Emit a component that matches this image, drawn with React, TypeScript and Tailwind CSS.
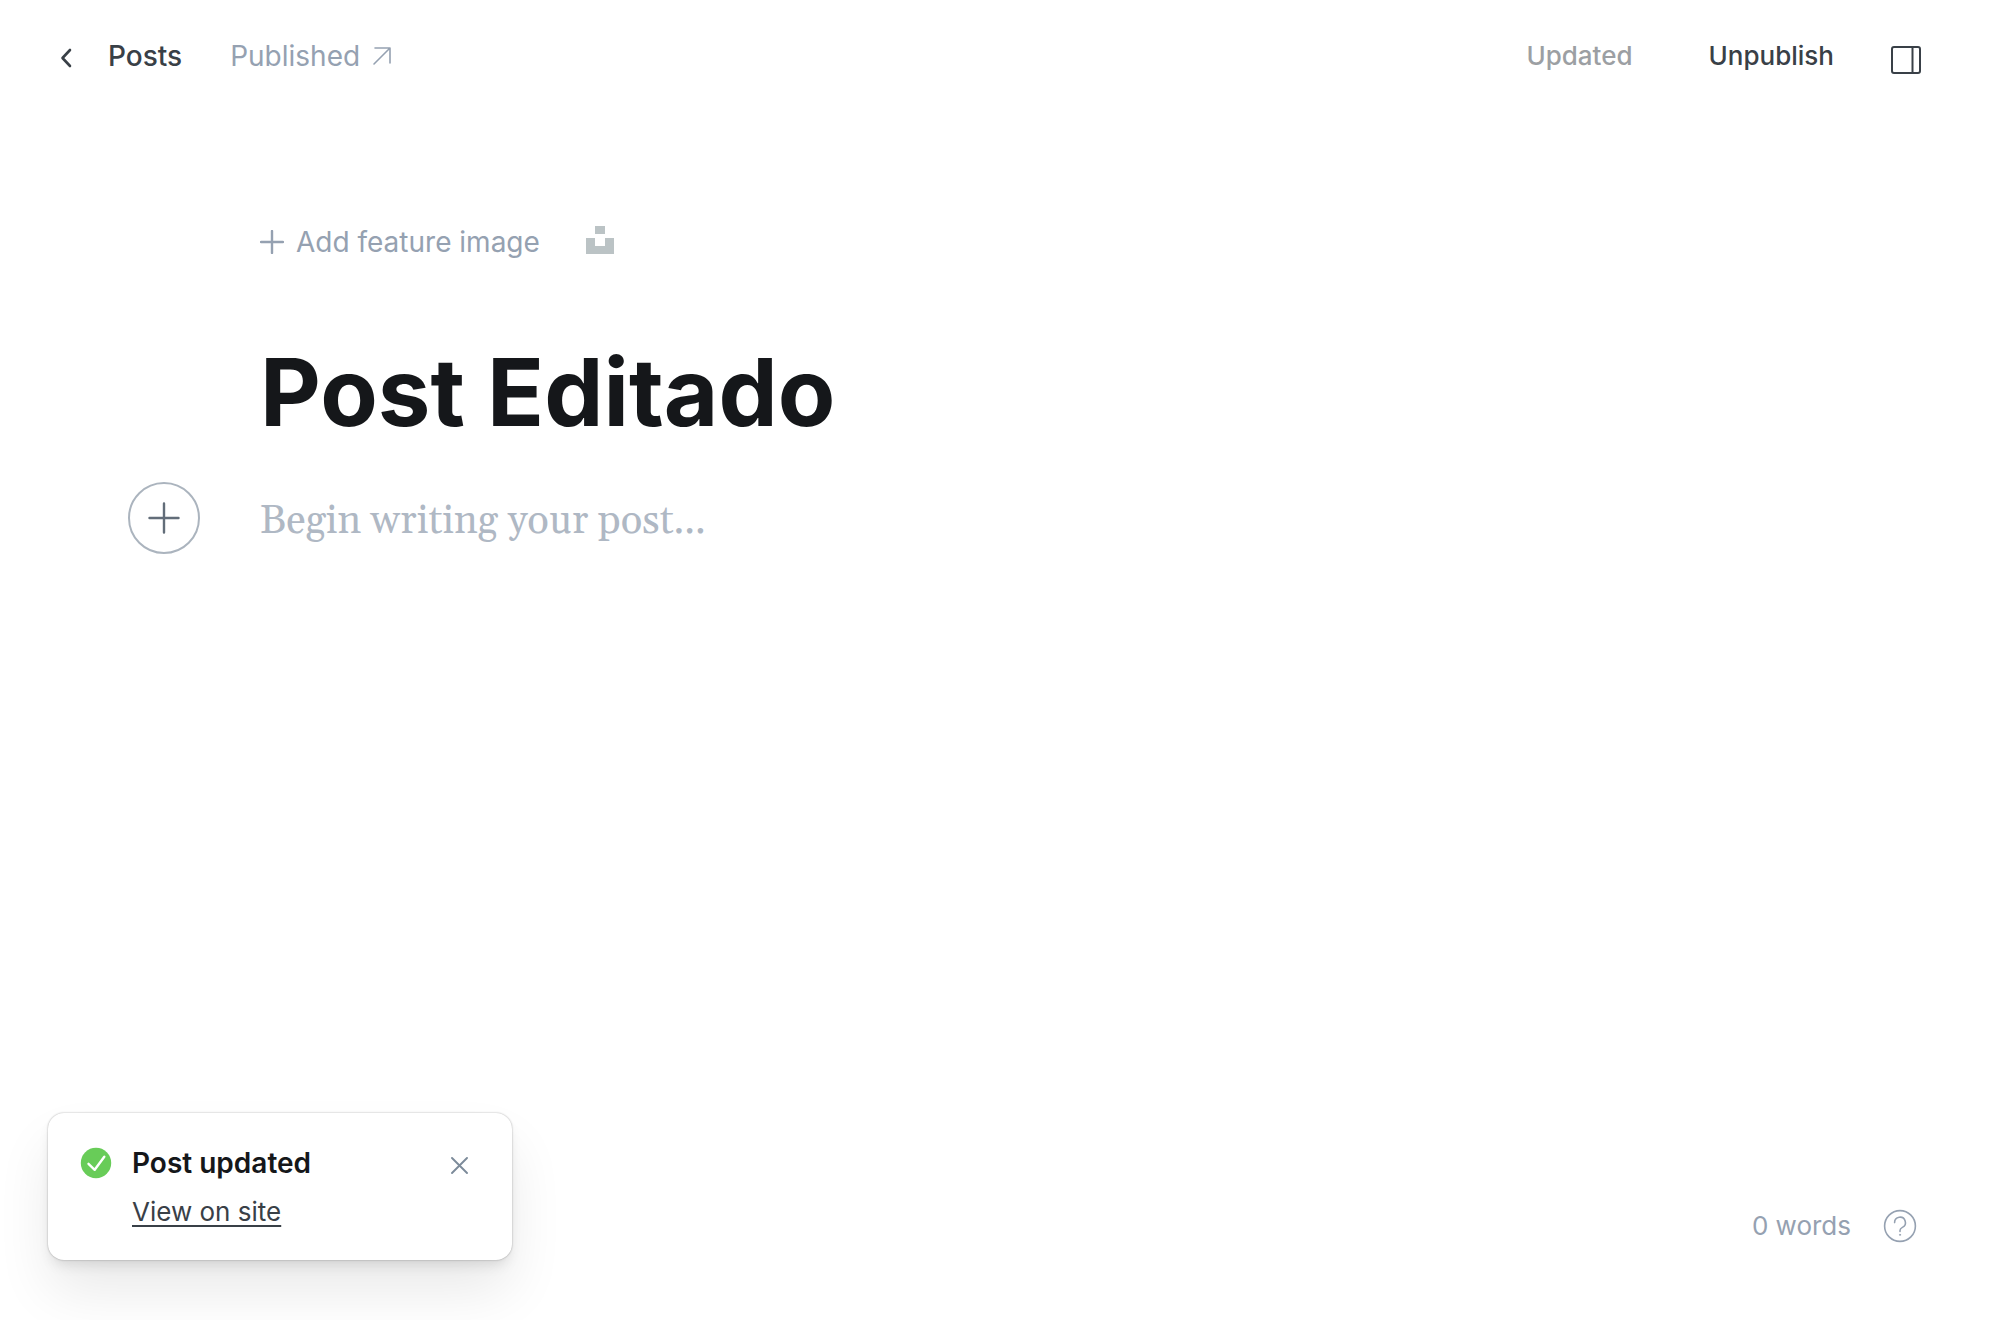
function Header() {
  return (
    <header className="flex items-start justify-between pt-9 pr-[78px] pl-[60px] leading-10">
      <nav className="flex items-center text-[28px]">
        <a href="#posts" className="flex items-center gap-9 font-medium text-[#394047]">
          <svg width="12" height="20" viewBox="0 0 12 20" fill="none" stroke="currentColor" strokeWidth="2.6" strokeLinecap="round" strokeLinejoin="round" className="mt-1" aria-hidden="true">
            <path d="M10 2 2.5 10 10 18" />
          </svg>
          Posts
        </a>
        <a href="#published" className="ml-12 flex items-center gap-3 text-[#95a1b1]">
          Published
          <svg width="20" height="20" viewBox="0 0 20 20" fill="none" stroke="currentColor" strokeWidth="1.6" strokeLinecap="round" strokeLinejoin="round" aria-hidden="true">
            <path d="M2 18 18 2M3 2h15v15" />
          </svg>
        </a>
      </nav>
      <div className="flex items-center text-[26px] font-medium">
        <span className="text-[#9c9fa3]">Updated</span>
        <button type="button" className="ml-[76px] text-[#394047]">Unpublish</button>
        <button type="button" aria-label="Settings" className="mt-2 ml-14 text-[#394047]">
          <svg width="32" height="28" viewBox="0 0 32 28" fill="none" stroke="currentColor" strokeWidth="2" className="block" aria-hidden="true">
            <rect x="2" y="1" width="28" height="26" rx="2" />
            <path d="M22.5 1v26" />
          </svg>
        </button>
      </div>
    </header>
  );
}

function Editor() {
  return (
    <main className="grow pt-[146px] pr-12 pl-[260px]">
      <div className="flex items-center gap-[46px] text-[28px] leading-10 text-[#95a1b1]">
        <button type="button" className="flex items-center gap-3">
          <svg width="24" height="24" viewBox="0 0 24 24" fill="none" stroke="currentColor" strokeWidth="2.4" strokeLinecap="round" aria-hidden="true">
            <path d="M12 1v22M1 12h22" />
          </svg>
          Add feature image
        </button>
        <button type="button" aria-label="Select from Unsplash" className="-mt-1 text-[#bbc3c5]">
          <svg width="28" height="28" viewBox="0 0 28 28" fill="currentColor" className="block" aria-hidden="true">
            <path d="M9 0h10v8H9zM0 12h9v8h10v-8h9v16H0z" />
          </svg>
        </button>
      </div>
      <h1 className="mt-[74px] text-[94px] leading-[112px] font-bold text-[#15171a]">Post Editado</h1>
      <div className="mt-[34px] -ml-[132px] flex items-center gap-[60px]">
        <button type="button" aria-label="Add a card" className="flex size-[72px] shrink-0 items-center justify-center rounded-full border-2 border-[#abb4be] text-[#626d79]">
          <svg width="32" height="32" viewBox="0 0 32 32" fill="none" stroke="currentColor" strokeWidth="2.4" strokeLinecap="round" aria-hidden="true">
            <path d="M16 1.5v29M1.5 16h29" />
          </svg>
        </button>
        <input
          aria-label="Post body"
          placeholder="Begin writing your post..."
          className="min-w-0 grow pt-2 font-['Georgia','Gelasio','Liberation_Serif',serif] text-[40px] leading-[64px] text-[#15171a] outline-none placeholder:text-[#afb8c4] placeholder:opacity-100"
        />
      </div>
    </main>
  );
}

function Toast() {
  return (
    <aside className="flex w-[464px] items-start rounded-2xl bg-white p-8 pb-7 shadow-[0_0_2px_rgba(0,0,0,0.35),0_8px_14px_-4px_rgba(0,0,0,0.12),0_32px_56px_-2px_rgba(0,0,0,0.09)]">
      <svg width="32" height="32" viewBox="0 0 32 32" fill="none" className="mt-0.5 shrink-0" aria-hidden="true">
        <circle cx="16" cy="16" r="15.2" fill="#68cc58" />
        <path d="m8.5 16.8 6.2 6L24.3 9.7" stroke="white" strokeWidth="2.4" strokeLinecap="round" strokeLinejoin="round" />
      </svg>
      <div className="ml-5 flex grow flex-col items-start leading-10">
        <strong className="text-[28px] leading-9 font-semibold text-[#15171a]">Post updated</strong>
        <a href="#view" className="mt-[11px] text-[26px] text-[#394047] underline decoration-2 underline-offset-4">View on site</a>
      </div>
      <button type="button" aria-label="Close" className="mt-3 mr-3 text-[#7c8b9a]">
        <svg width="17" height="17" viewBox="0 0 17 17" fill="none" stroke="currentColor" strokeWidth="1.9" strokeLinecap="round" className="block" aria-hidden="true">
          <path d="m1 1 15 15M16 1 1 16" />
        </svg>
      </button>
    </aside>
  );
}

export default function App() {
  return (
    <div className="flex min-h-screen flex-col overflow-hidden bg-white font-['Inter',sans-serif]">
      <Header />
      <Editor />
      <footer className="flex items-end justify-between pr-[83px] pb-[60px] pl-12">
        <Toast />
        <div className="mb-3.5 flex items-center gap-8 text-[26px] leading-10 text-[#95a1b1]">
          <span>0 words</span>
          <a href="#help" aria-label="Help">
            <svg width="34" height="34" viewBox="0 0 34 34" fill="none" stroke="currentColor" strokeWidth="1.6" strokeLinecap="round" strokeLinejoin="round" className="block" aria-hidden="true">
              <circle cx="17" cy="17" r="15.4" />
              <path d="M11.6 13.6a5.4 5.4 0 1 1 7.8 4.8C17.8 19.2 17 20.2 17 21.6v.8" />
              <circle cx="17" cy="25.8" r="0.6" fill="currentColor" strokeWidth="0.8" />
            </svg>
          </a>
        </div>
      </footer>
    </div>
  );
}
